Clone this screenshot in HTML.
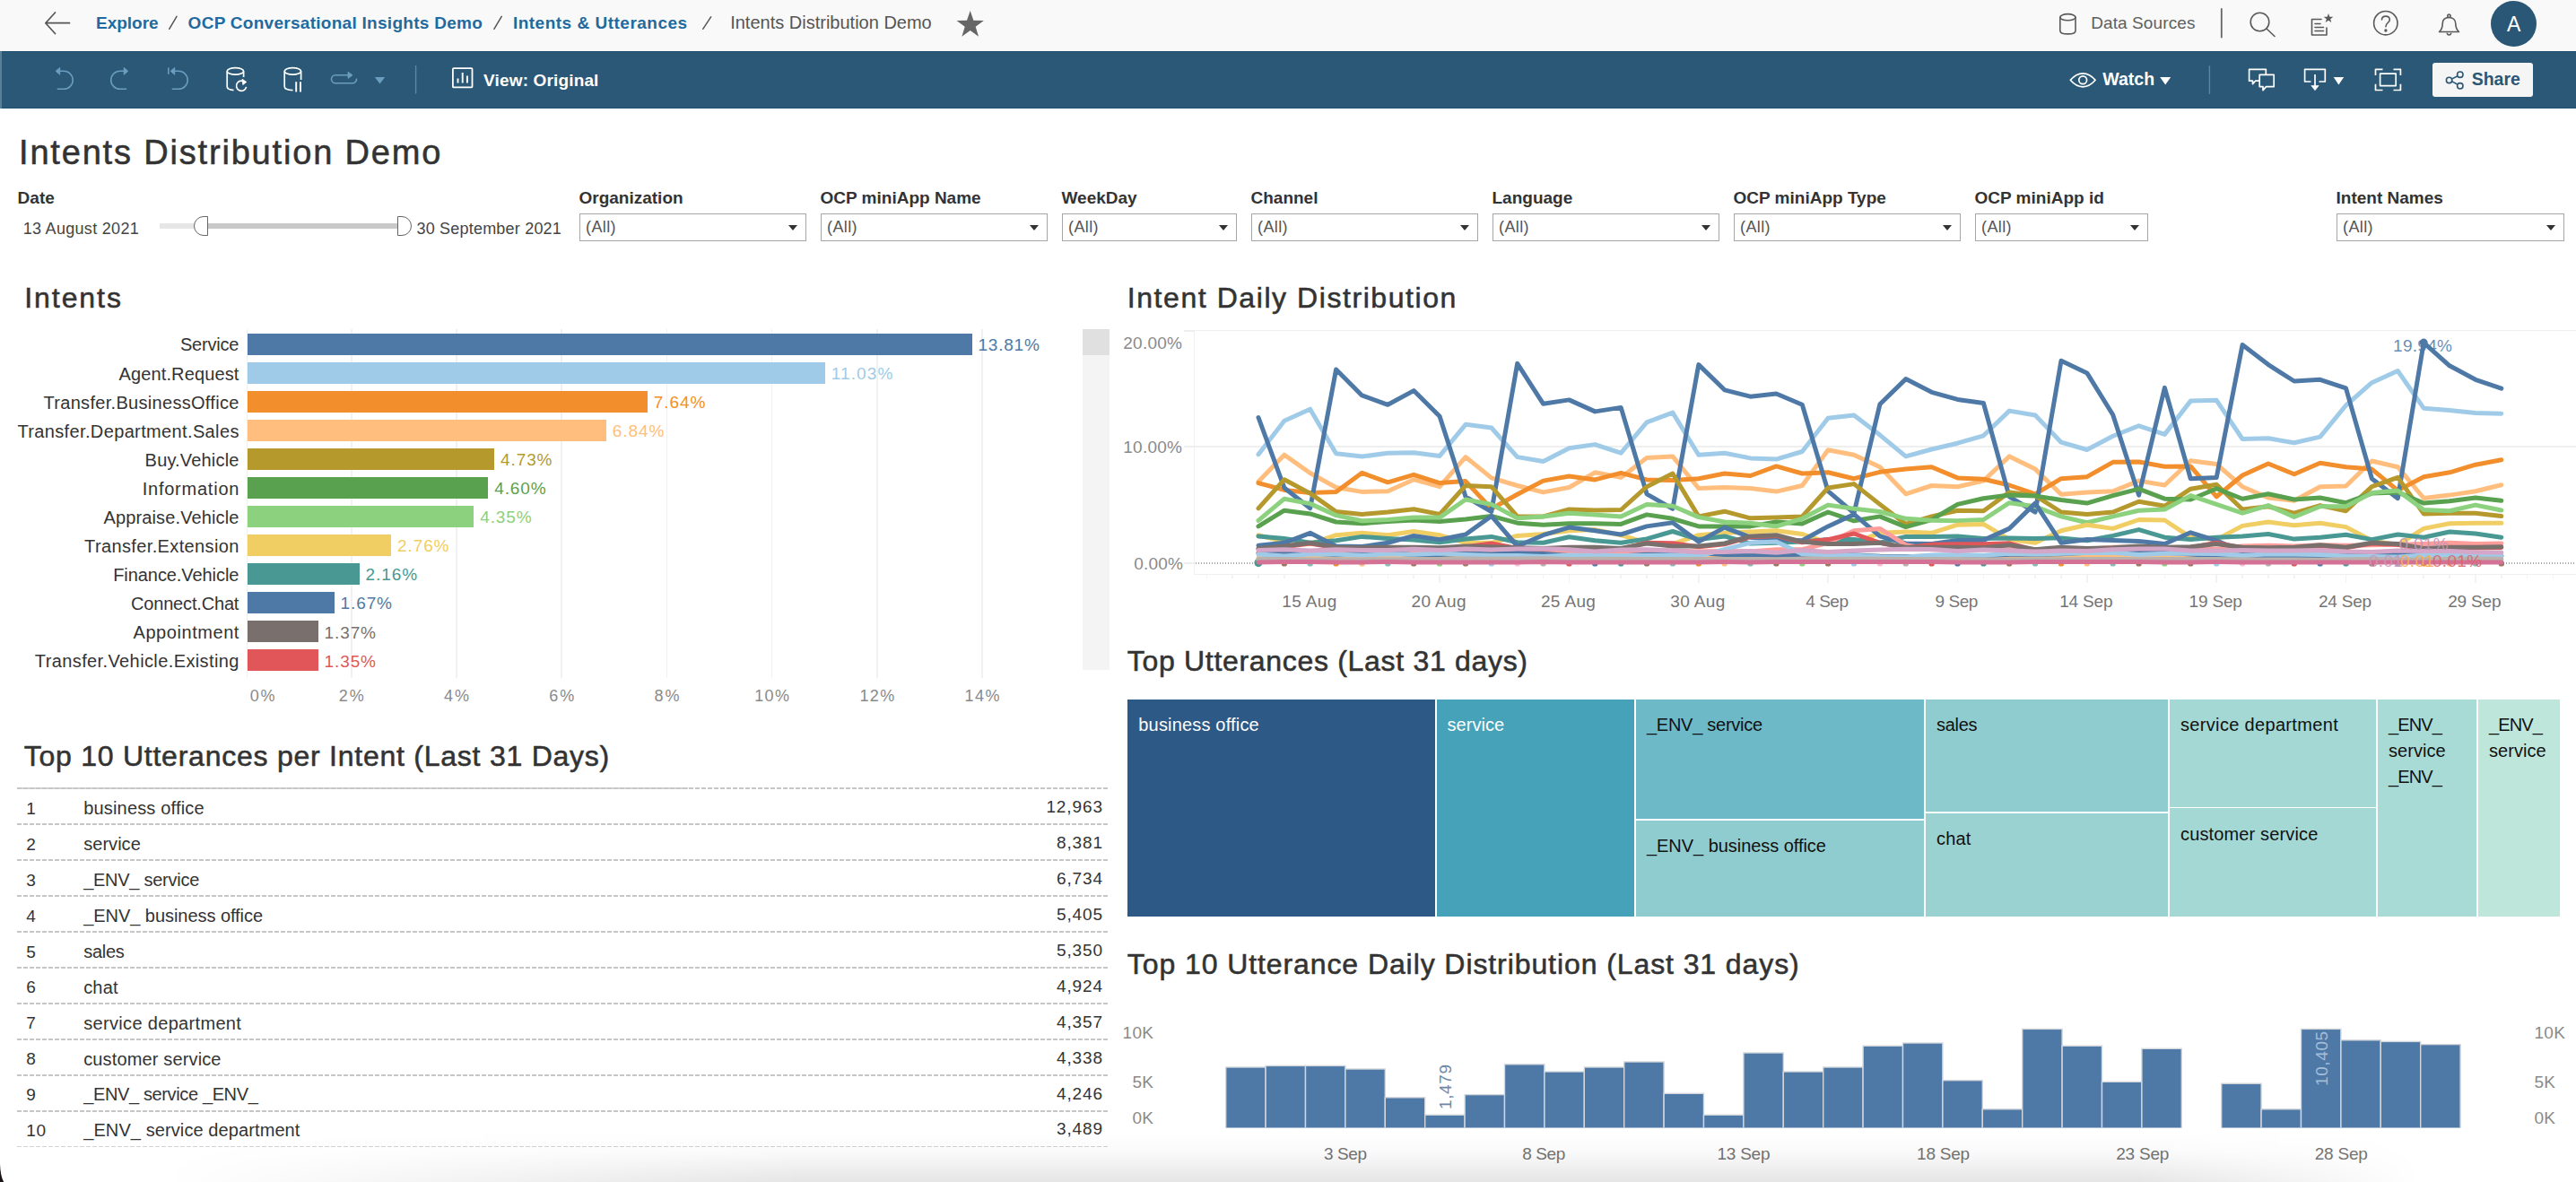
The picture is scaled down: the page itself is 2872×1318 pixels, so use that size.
<!DOCTYPE html><html><head><meta charset="utf-8"><title>Intents Distribution Demo</title><style>
*{box-sizing:border-box;margin:0;padding:0}
html,body{width:2872px;height:1318px;overflow:hidden;background:#fff}
body{position:relative;font-family:"Liberation Sans", sans-serif;color:#333}
.abs{position:absolute}
.t{position:absolute;white-space:pre;line-height:1}
.b{font-weight:700}
svg{position:absolute;overflow:visible}
</style></head><body>
<div class="abs" style="left:0;top:0;width:2872px;height:57px;background:#f9f9f9"></div>
<div class="abs" style="left:0;top:57px;width:2872px;height:64px;background:#2a5876;border-top:1px solid #23506f;border-bottom:1px solid #23506f"></div>
<div class="abs" style="left:0;top:57px;width:2px;height:64px;background:#587e98"></div>
<svg style="left:48px;top:11px" width="32" height="30" fill="none" stroke="#555" stroke-width="1.7" stroke-linecap="round" stroke-linejoin="round"><path d="M29.5 14.7H3M13.5 3L2.8 14.7L13.5 26.5"/></svg>
<div class="t" style="top:16.02px;font-size:19px;color:#1f6a9e;font-weight:700;left:107.00px;">Explore</div>
<div class="t" style="top:16.02px;font-size:19px;color:#1f6a9e;font-weight:700;letter-spacing:0.28px;left:209.60px;">OCP Conversational Insights Demo</div>
<div class="t" style="top:16.02px;font-size:19px;color:#1f6a9e;font-weight:700;letter-spacing:0.5px;left:571.90px;">Intents &amp; Utterances</div>
<div class="t" style="top:15.17px;font-size:20px;color:#555;left:814.20px;">Intents Distribution Demo</div>
<svg style="left:0;top:0" width="900" height="57" stroke="#555" stroke-width="1.5" stroke-linecap="round"><path d="M197 18.4L188.7 32.3M559.2 18.4L550.9 32.3M792.6 18.9L783.7 32.3"/></svg>
<svg style="left:0;top:0" width="1200" height="57"><polygon points="1081.70,11.90 1085.40,22.70 1096.82,22.89 1087.69,29.75 1091.05,40.66 1081.70,34.10 1072.35,40.66 1075.71,29.75 1066.58,22.89 1078.00,22.70" fill="#666"/></svg>
<svg style="left:2290px;top:8px" width="560" height="44" fill="none" stroke="#5a5a5a" stroke-width="1.6" stroke-linecap="round" stroke-linejoin="round"><ellipse cx="15.4" cy="11.2" rx="8.6" ry="3.6"/><path d="M6.8 11.2V26.2C6.8 28.4 10.6 29.9 15.4 29.9S24 28.4 24 26.2V11.2"/><path d="M186.8 2V33.6" stroke="#666" stroke-width="1.8"/><circle cx="229.5" cy="16.5" r="10.3"/><path d="M237 24L246 32.5"/><path d="M298 13.5H287.5V31H304V23"/><path d="M291 18.5H297M291 22.5H300.5M291 26.5H300.5"/><polygon stroke="none" points="306.00,6.90 307.35,10.64 311.33,10.77 308.19,13.21 309.29,17.03 306.00,14.80 302.71,17.03 303.81,13.21 300.67,10.77 304.65,10.64" fill="#5a5a5a"/><circle cx="369.8" cy="17.7" r="13.2"/><path d="M365.5 14C365.5 8.8 374.3 8.8 374.3 14C374.3 17.3 369.9 17.4 369.9 21.8"/><circle cx="369.9" cy="26" r="0.9" fill="#5a5a5a"/><path d="M429.5 27.5H451.5C448 24.5 447.8 21.5 447.8 18.5C447.8 13.8 444.6 11.5 440.5 11.5S433.2 13.8 433.2 18.5C433.2 21.5 433 24.5 429.5 27.5Z"/><circle cx="440.5" cy="9.8" r="1.7"/><path d="M438.3 29.3A2.3 2.3 0 0 0 442.7 29.3"/></svg>
<div class="t" style="top:15.92px;font-size:19px;color:#5f5f5f;letter-spacing:0.1px;left:2331.20px;">Data Sources</div>
<div class="abs" style="left:2776.7px;top:0.7px;width:51.4px;height:51.4px;border-radius:50%;background:#2a5775"></div>
<div class="t" style="top:15.53px;font-size:23px;color:#fff;left:2802.60px;transform:translateX(-50%);">A</div>
<svg style="left:0;top:0" width="2872" height="121" fill="none" stroke="#6b9dbf" stroke-width="1.6" stroke-linecap="butt" stroke-linejoin="round"><path d="M64.2 79.3H71.2A10 10 0 0 1 71.2 99.3H63.7" /><path d="M66.7 75.4L62.2 79.3L66.7 83.2Z" fill="#6b9dbf" stroke-width="1"/><path d="M140.7 79.3H133.7A10 10 0 0 0 133.7 99.3H141.2" /><path d="M138.2 75.4L142.7 79.3L138.2 83.2Z" fill="#6b9dbf" stroke-width="1"/><path d="M192.2 79.3H199.2A10 10 0 0 1 199.2 99.3H191.7" /><path d="M194.7 75.4L190.2 79.3L194.7 83.2Z" fill="#6b9dbf" stroke-width="1"/><path d="M187.8 75.4V82.8"/><g stroke="#fff" stroke-width="1.7"><ellipse cx="262.4" cy="79.4" rx="9.2" ry="3.8"/><path d="M253.2 79.4V96.5C253.2 98.6 256 100.2 260.5 100.6M271.6 79.4V86"/><path d="M273.5 92.2A5.6 5.6 0 1 0 274.6 96.8"/><path d="M270 88.2L274.8 91.4L270.8 94.6Z" fill="#fff" stroke-width="0.8"/></g><g stroke="#fff" stroke-width="1.7"><ellipse cx="326.4" cy="79.4" rx="9.2" ry="3.8"/><path d="M317.2 79.4V96.5C317.2 98.8 320.5 100.4 326.5 100.6M335.6 79.4V89"/><path d="M330.2 91.2V102.6M335 91.2V102.6" stroke-width="1.9"/></g><path d="M392 83.8H374A4.5 4.5 0 0 0 374 92.8H393A4.5 4.5 0 0 0 397.4 87.6"/><path d="M388 80.2L393 83.8L388 87.4Z" fill="#6b9dbf" stroke-width="0.8"/><path d="M417.8 86H429.2L423.5 93.6Z" fill="#6b9dbf" stroke="none"/><path d="M463.6 73V104.6" stroke="#5689ab" stroke-width="1.4"/><g stroke="#fff" stroke-width="1.8"><rect x="504.9" y="76.1" width="21.6" height="21.3" rx="1"/><path d="M510.5 92.5V87.5M515.7 92.5V81M520.9 92.5V84.6" stroke-width="1.9"/></g><g stroke="#fff" stroke-width="1.7"><path d="M2308.3 89.3C2313 83.8 2317.5 81.8 2322.2 81.8S2331.4 83.8 2336.1 89.3C2331.4 94.8 2326.9 96.8 2322.2 96.8S2313 94.8 2308.3 89.3Z"/><circle cx="2322.2" cy="89.3" r="4.4"/></g><path d="M2408.2 86H2420.2L2414.2 94.4Z" fill="#fff" stroke="none"/><path d="M2463.4 73.3V104.8" stroke="#5689ab" stroke-width="1.4"/><g stroke="#fff" stroke-width="1.7"><path d="M2519 90.2H2514.5L2511.5 93.6V90.2H2507.6V77.3H2526.3V83"/><path d="M2519.2 83.4H2535.2V96.6H2526.5L2523 100.6V96.6H2519.2Z"/></g><g stroke="#fff" stroke-width="1.7"><path d="M2576.5 91H2569.6V77.3H2592.3V91H2585.5"/><path d="M2581 83V97"/><path d="M2576.8 95.5H2585.2L2581 100.8Z" fill="#fff" stroke-width="0.6"/></g><path d="M2601.7 86H2613.2L2607.4 94.4Z" fill="#fff" stroke="none"/><g stroke="#fff" stroke-width="1.7"><rect x="2653.6" y="82.2" width="17.6" height="13.4"/><path d="M2648.5 84V77.4H2656.5M2668.5 77.4H2676.4V84M2676.4 93.8V100.5H2668.5M2656.5 100.5H2648.5V93.8"/></g></svg>
<div class="t" style="top:79.62px;font-size:19px;color:#fff;font-weight:700;letter-spacing:0.15px;left:539.10px;">View: Original</div>
<div class="t" style="top:79.09px;font-size:19.5px;color:#fff;font-weight:700;left:2344.30px;">Watch</div>
<div class="abs" style="left:2712px;top:70px;width:112px;height:38px;border-radius:3px;background:#f5f5f5"></div>
<svg style="left:2724px;top:78px" width="26" height="24" fill="#f5f5f5" stroke="#2a5775" stroke-width="1.6"><path d="M7 11.4L18.5 5.5M7 11.4L18.5 17.5" fill="none"/><circle cx="6.6" cy="11.4" r="3.2"/><circle cx="18.8" cy="5.2" r="3.2"/><circle cx="18.8" cy="17.8" r="3.2"/></svg>
<div class="t" style="top:79.09px;font-size:19.5px;color:#2a5775;font-weight:700;left:2755.70px;">Share</div>
<div class="t" style="top:151.03px;font-size:38px;color:#333;letter-spacing:1.819px;left:21.00px;-webkit-text-stroke:0.55px #333;">Intents Distribution Demo</div>
<div class="t" style="top:210.92px;font-size:19px;color:#333;font-weight:700;left:19.60px;">Date</div>
<div class="t" style="top:245.56px;font-size:18px;color:#444;letter-spacing:0.3px;left:25.70px;">13 August 2021</div>
<div class="t" style="top:245.56px;font-size:18px;color:#444;letter-spacing:0.2px;left:464.50px;">30 September 2021</div>
<div class="abs" style="left:178px;top:249px;width:46px;height:6px;background:#e6e6e6"></div>
<div class="abs" style="left:224px;top:249px;width:224px;height:6px;background:#c9c9c9"></div>
<div class="abs" style="left:216px;top:241px;width:16px;height:22px;background:#fff;border:1.5px solid #666;border-radius:11px 0 0 11px"></div>
<div class="abs" style="left:443px;top:241px;width:16px;height:22px;background:#fff;border:1.5px solid #666;border-radius:0 11px 11px 0"></div>
<div class="t" style="top:210.92px;font-size:19px;color:#333;font-weight:700;left:645.50px;">Organization</div>
<div class="abs" style="left:646px;top:238px;width:253px;height:31px;border:1.5px solid #a6a6a6;background:#fff"></div>
<div class="t" style="top:244.26px;font-size:18px;color:#555;letter-spacing:0.4px;left:653.00px;">(All)</div>
<svg style="left:879px;top:251px" width="10" height="6"><path d="M0 0H10L5 6Z" fill="#333"/></svg>
<div class="t" style="top:210.92px;font-size:19px;color:#333;font-weight:700;left:914.50px;">OCP miniApp Name</div>
<div class="abs" style="left:915px;top:238px;width:253px;height:31px;border:1.5px solid #a6a6a6;background:#fff"></div>
<div class="t" style="top:244.26px;font-size:18px;color:#555;letter-spacing:0.4px;left:922.00px;">(All)</div>
<svg style="left:1148px;top:251px" width="10" height="6"><path d="M0 0H10L5 6Z" fill="#333"/></svg>
<div class="t" style="top:210.92px;font-size:19px;color:#333;font-weight:700;left:1183.50px;">WeekDay</div>
<div class="abs" style="left:1184px;top:238px;width:195px;height:31px;border:1.5px solid #a6a6a6;background:#fff"></div>
<div class="t" style="top:244.26px;font-size:18px;color:#555;letter-spacing:0.4px;left:1191.00px;">(All)</div>
<svg style="left:1359px;top:251px" width="10" height="6"><path d="M0 0H10L5 6Z" fill="#333"/></svg>
<div class="t" style="top:210.92px;font-size:19px;color:#333;font-weight:700;left:1394.50px;">Channel</div>
<div class="abs" style="left:1395px;top:238px;width:253px;height:31px;border:1.5px solid #a6a6a6;background:#fff"></div>
<div class="t" style="top:244.26px;font-size:18px;color:#555;letter-spacing:0.4px;left:1402.00px;">(All)</div>
<svg style="left:1628px;top:251px" width="10" height="6"><path d="M0 0H10L5 6Z" fill="#333"/></svg>
<div class="t" style="top:210.92px;font-size:19px;color:#333;font-weight:700;left:1663.50px;">Language</div>
<div class="abs" style="left:1664px;top:238px;width:253px;height:31px;border:1.5px solid #a6a6a6;background:#fff"></div>
<div class="t" style="top:244.26px;font-size:18px;color:#555;letter-spacing:0.4px;left:1671.00px;">(All)</div>
<svg style="left:1897px;top:251px" width="10" height="6"><path d="M0 0H10L5 6Z" fill="#333"/></svg>
<div class="t" style="top:210.92px;font-size:19px;color:#333;font-weight:700;left:1932.50px;">OCP miniApp Type</div>
<div class="abs" style="left:1933px;top:238px;width:253px;height:31px;border:1.5px solid #a6a6a6;background:#fff"></div>
<div class="t" style="top:244.26px;font-size:18px;color:#555;letter-spacing:0.4px;left:1940.00px;">(All)</div>
<svg style="left:2166px;top:251px" width="10" height="6"><path d="M0 0H10L5 6Z" fill="#333"/></svg>
<div class="t" style="top:210.92px;font-size:19px;color:#333;font-weight:700;left:2201.50px;">OCP miniApp id</div>
<div class="abs" style="left:2202px;top:238px;width:193px;height:31px;border:1.5px solid #a6a6a6;background:#fff"></div>
<div class="t" style="top:244.26px;font-size:18px;color:#555;letter-spacing:0.4px;left:2209.00px;">(All)</div>
<svg style="left:2375px;top:251px" width="10" height="6"><path d="M0 0H10L5 6Z" fill="#333"/></svg>
<div class="t" style="top:210.92px;font-size:19px;color:#333;font-weight:700;left:2604.50px;">Intent Names</div>
<div class="abs" style="left:2605px;top:238px;width:254px;height:31px;border:1.5px solid #a6a6a6;background:#fff"></div>
<div class="t" style="top:244.26px;font-size:18px;color:#555;letter-spacing:0.4px;left:2612.00px;">(All)</div>
<svg style="left:2839px;top:251px" width="10" height="6"><path d="M0 0H10L5 6Z" fill="#333"/></svg>
<div class="t" style="top:316.41px;font-size:32px;color:#333;letter-spacing:1.922px;left:27.30px;-webkit-text-stroke:0.55px #333;">Intents</div>
<div class="abs" style="left:274.7px;top:367px;width:1.8px;height:389px;background:#f1f1f1"></div>
<div class="abs" style="left:390.9px;top:367px;width:1.8px;height:389px;background:#f1f1f1"></div>
<div class="abs" style="left:508.1px;top:367px;width:1.8px;height:389px;background:#f1f1f1"></div>
<div class="abs" style="left:625.3px;top:367px;width:1.8px;height:389px;background:#f1f1f1"></div>
<div class="abs" style="left:742.5px;top:367px;width:1.8px;height:389px;background:#f1f1f1"></div>
<div class="abs" style="left:859.7px;top:367px;width:1.8px;height:389px;background:#f1f1f1"></div>
<div class="abs" style="left:976.9px;top:367px;width:1.8px;height:389px;background:#f1f1f1"></div>
<div class="abs" style="left:1094.1px;top:367px;width:1.8px;height:389px;background:#f1f1f1"></div>
<div class="abs" style="left:276px;top:372.00px;width:807.6px;height:24px;background:#4e79a7"></div>
<div class="t" style="top:374.47px;font-size:20px;color:#333;letter-spacing:-0.198px;right:2605.80px;">Service</div>
<div class="t" style="top:375.12px;font-size:19px;color:#4e79a7;letter-spacing:0.811px;left:1090.40px;">13.81%</div>
<div class="abs" style="left:276px;top:404.04px;width:644.0px;height:24px;background:#a0cbe8"></div>
<div class="t" style="top:406.51px;font-size:20px;color:#333;letter-spacing:0.132px;right:2605.47px;">Agent.Request</div>
<div class="t" style="top:407.16px;font-size:19px;color:#a0cbe8;letter-spacing:1.094px;left:926.80px;">11.03%</div>
<div class="abs" style="left:276px;top:436.08px;width:446.0px;height:24px;background:#f28e2b"></div>
<div class="t" style="top:438.55px;font-size:20px;color:#333;letter-spacing:0.304px;right:2605.30px;">Transfer.BusinessOffice</div>
<div class="t" style="top:439.20px;font-size:19px;color:#f28e2b;letter-spacing:0.906px;left:728.80px;">7.64%</div>
<div class="abs" style="left:276px;top:468.12px;width:400.0px;height:24px;background:#ffbe7d"></div>
<div class="t" style="top:470.59px;font-size:20px;color:#333;letter-spacing:0.364px;right:2605.24px;">Transfer.Department.Sales</div>
<div class="t" style="top:471.24px;font-size:19px;color:#ffbe7d;letter-spacing:0.906px;left:682.80px;">6.84%</div>
<div class="abs" style="left:276px;top:500.16px;width:275.2px;height:24px;background:#b6992d"></div>
<div class="t" style="top:502.63px;font-size:20px;color:#333;letter-spacing:0.177px;right:2605.42px;">Buy.Vehicle</div>
<div class="t" style="top:503.28px;font-size:19px;color:#b6992d;letter-spacing:0.906px;left:558.00px;">4.73%</div>
<div class="abs" style="left:276px;top:532.20px;width:268.4px;height:24px;background:#59a14f"></div>
<div class="t" style="top:534.67px;font-size:20px;color:#333;letter-spacing:0.765px;right:2604.84px;">Information</div>
<div class="t" style="top:535.32px;font-size:19px;color:#59a14f;letter-spacing:0.906px;left:551.20px;">4.60%</div>
<div class="abs" style="left:276px;top:564.24px;width:252.4px;height:24px;background:#8cd17d"></div>
<div class="t" style="top:566.71px;font-size:20px;color:#333;letter-spacing:0.127px;right:2605.47px;">Appraise.Vehicle</div>
<div class="t" style="top:567.36px;font-size:19px;color:#8cd17d;letter-spacing:0.906px;left:535.20px;">4.35%</div>
<div class="abs" style="left:276px;top:596.28px;width:160.2px;height:24px;background:#f1ce63"></div>
<div class="t" style="top:598.75px;font-size:20px;color:#333;letter-spacing:0.37px;right:2605.23px;">Transfer.Extension</div>
<div class="t" style="top:599.40px;font-size:19px;color:#f1ce63;letter-spacing:0.906px;left:443.00px;">2.76%</div>
<div class="abs" style="left:276px;top:628.32px;width:124.8px;height:24px;background:#499894"></div>
<div class="t" style="top:630.79px;font-size:20px;color:#333;letter-spacing:-0.072px;right:2605.67px;">Finance.Vehicle</div>
<div class="t" style="top:631.44px;font-size:19px;color:#499894;letter-spacing:0.906px;left:407.60px;">2.16%</div>
<div class="abs" style="left:276px;top:660.36px;width:96.7px;height:24px;background:#4e79a7"></div>
<div class="t" style="top:662.83px;font-size:20px;color:#333;letter-spacing:-0.173px;right:2605.77px;">Connect.Chat</div>
<div class="t" style="top:663.48px;font-size:19px;color:#4e79a7;letter-spacing:0.906px;left:379.50px;">1.67%</div>
<div class="abs" style="left:276px;top:692.40px;width:78.7px;height:24px;background:#79706e"></div>
<div class="t" style="top:694.87px;font-size:20px;color:#333;letter-spacing:0.56px;right:2605.04px;">Appointment</div>
<div class="t" style="top:695.52px;font-size:19px;color:#79706e;letter-spacing:0.906px;left:361.50px;">1.37%</div>
<div class="abs" style="left:276px;top:724.44px;width:78.7px;height:24px;background:#e15759"></div>
<div class="t" style="top:726.91px;font-size:20px;color:#333;letter-spacing:0.389px;right:2605.21px;">Transfer.Vehicle.Existing</div>
<div class="t" style="top:727.56px;font-size:19px;color:#e15759;letter-spacing:0.906px;left:361.50px;">1.35%</div>
<div class="t" style="top:766.76px;font-size:18px;color:#8a8a8a;letter-spacing:1.584px;left:278.80px;">0%</div>
<div class="t" style="top:766.76px;font-size:18px;color:#8a8a8a;letter-spacing:1.984px;left:392.79px;transform:translateX(-50%);">2%</div>
<div class="t" style="top:766.76px;font-size:18px;color:#8a8a8a;letter-spacing:1.984px;left:509.99px;transform:translateX(-50%);">4%</div>
<div class="t" style="top:766.76px;font-size:18px;color:#8a8a8a;letter-spacing:1.984px;left:627.19px;transform:translateX(-50%);">6%</div>
<div class="t" style="top:766.76px;font-size:18px;color:#8a8a8a;letter-spacing:1.984px;left:744.39px;transform:translateX(-50%);">8%</div>
<div class="t" style="top:766.76px;font-size:18px;color:#8a8a8a;letter-spacing:1.386px;left:861.29px;transform:translateX(-50%);">10%</div>
<div class="t" style="top:766.76px;font-size:18px;color:#8a8a8a;letter-spacing:1.386px;left:978.49px;transform:translateX(-50%);">12%</div>
<div class="t" style="top:766.76px;font-size:18px;color:#8a8a8a;letter-spacing:1.386px;left:1095.69px;transform:translateX(-50%);">14%</div>
<div class="abs" style="left:1207px;top:367px;width:30px;height:380px;background:#f4f4f4"></div>
<div class="abs" style="left:1207px;top:367px;width:30px;height:29px;background:#e0e0e0"></div>
<div class="t" style="top:827.21px;font-size:32px;color:#333;letter-spacing:0.757px;left:26.70px;-webkit-text-stroke:0.55px #333;">Top 10 Utterances per Intent (Last 31 Days)</div>
<div class="abs" style="left:19px;top:878.00px;width:1216px;height:2px;background:repeating-linear-gradient(90deg,#c6c6c6 0 5px,transparent 5px 7px)"></div>
<div class="abs" style="left:22.5px;top:878.00px;width:744px;height:2px;background:repeating-linear-gradient(90deg,#c6c6c6 0 5px,transparent 5px 7px);opacity:.75"></div>
<div class="abs" style="left:19px;top:917.95px;width:1216px;height:2px;background:repeating-linear-gradient(90deg,#c6c6c6 0 5px,transparent 5px 7px)"></div>
<div class="abs" style="left:19px;top:957.90px;width:1216px;height:2px;background:repeating-linear-gradient(90deg,#c6c6c6 0 5px,transparent 5px 7px)"></div>
<div class="abs" style="left:19px;top:997.85px;width:1216px;height:2px;background:repeating-linear-gradient(90deg,#c6c6c6 0 5px,transparent 5px 7px)"></div>
<div class="abs" style="left:19px;top:1037.80px;width:1216px;height:2px;background:repeating-linear-gradient(90deg,#c6c6c6 0 5px,transparent 5px 7px)"></div>
<div class="abs" style="left:19px;top:1077.75px;width:1216px;height:2px;background:repeating-linear-gradient(90deg,#c6c6c6 0 5px,transparent 5px 7px)"></div>
<div class="abs" style="left:19px;top:1117.70px;width:1216px;height:2px;background:repeating-linear-gradient(90deg,#c6c6c6 0 5px,transparent 5px 7px)"></div>
<div class="abs" style="left:19px;top:1157.65px;width:1216px;height:2px;background:repeating-linear-gradient(90deg,#c6c6c6 0 5px,transparent 5px 7px)"></div>
<div class="abs" style="left:19px;top:1197.60px;width:1216px;height:2px;background:repeating-linear-gradient(90deg,#c6c6c6 0 5px,transparent 5px 7px)"></div>
<div class="abs" style="left:19px;top:1237.55px;width:1216px;height:2px;background:repeating-linear-gradient(90deg,#c6c6c6 0 5px,transparent 5px 7px)"></div>
<div class="abs" style="left:19px;top:1277.70px;width:1216px;height:1.3px;background:repeating-linear-gradient(90deg,#d2d2d2 0 5px,transparent 5px 7px)"></div>
<div class="t" style="top:891.72px;font-size:19px;color:#333;left:29.30px;">1</div>
<div class="t" style="top:890.87px;font-size:20px;color:#333;letter-spacing:0.176px;left:93.20px;">business office</div>
<div class="t" style="top:889.92px;font-size:19px;color:#333;letter-spacing:0.897px;right:1642.10px;">12,963</div>
<div class="t" style="top:931.67px;font-size:19px;color:#333;left:29.30px;">2</div>
<div class="t" style="top:930.82px;font-size:20px;color:#333;letter-spacing:0.042px;left:93.20px;">service</div>
<div class="t" style="top:929.87px;font-size:19px;color:#333;letter-spacing:0.863px;right:1642.14px;">8,381</div>
<div class="t" style="top:971.62px;font-size:19px;color:#333;left:29.30px;">3</div>
<div class="t" style="top:970.77px;font-size:20px;color:#333;letter-spacing:-0.265px;left:93.20px;">_ENV_ service</div>
<div class="t" style="top:969.82px;font-size:19px;color:#333;letter-spacing:0.863px;right:1642.14px;">6,734</div>
<div class="t" style="top:1011.57px;font-size:19px;color:#333;left:29.30px;">4</div>
<div class="t" style="top:1010.72px;font-size:20px;color:#333;letter-spacing:-0.048px;left:93.20px;">_ENV_ business office</div>
<div class="t" style="top:1009.77px;font-size:19px;color:#333;letter-spacing:0.863px;right:1642.14px;">5,405</div>
<div class="t" style="top:1051.52px;font-size:19px;color:#333;left:29.30px;">5</div>
<div class="t" style="top:1050.67px;font-size:20px;color:#333;letter-spacing:-0.273px;left:93.20px;">sales</div>
<div class="t" style="top:1049.72px;font-size:19px;color:#333;letter-spacing:0.863px;right:1642.14px;">5,350</div>
<div class="t" style="top:1091.47px;font-size:19px;color:#333;left:29.30px;">6</div>
<div class="t" style="top:1090.62px;font-size:20px;color:#333;letter-spacing:0.165px;left:93.20px;">chat</div>
<div class="t" style="top:1089.67px;font-size:19px;color:#333;letter-spacing:0.863px;right:1642.14px;">4,924</div>
<div class="t" style="top:1131.42px;font-size:19px;color:#333;left:29.30px;">7</div>
<div class="t" style="top:1130.57px;font-size:20px;color:#333;letter-spacing:0.33px;left:93.20px;">service department</div>
<div class="t" style="top:1129.62px;font-size:19px;color:#333;letter-spacing:0.863px;right:1642.14px;">4,357</div>
<div class="t" style="top:1171.37px;font-size:19px;color:#333;left:29.30px;">8</div>
<div class="t" style="top:1170.52px;font-size:20px;color:#333;letter-spacing:0.143px;left:93.20px;">customer service</div>
<div class="t" style="top:1169.57px;font-size:19px;color:#333;letter-spacing:0.863px;right:1642.14px;">4,338</div>
<div class="t" style="top:1211.32px;font-size:19px;color:#333;left:29.30px;">9</div>
<div class="t" style="top:1210.47px;font-size:20px;color:#333;letter-spacing:-0.367px;left:93.20px;">_ENV_ service _ENV_</div>
<div class="t" style="top:1209.52px;font-size:19px;color:#333;letter-spacing:0.863px;right:1642.14px;">4,246</div>
<div class="t" style="top:1251.27px;font-size:19px;color:#333;letter-spacing:0.665px;left:29.30px;">10</div>
<div class="t" style="top:1250.42px;font-size:20px;color:#333;letter-spacing:0.095px;left:93.20px;">_ENV_ service department</div>
<div class="t" style="top:1249.47px;font-size:19px;color:#333;letter-spacing:0.863px;right:1642.14px;">3,489</div>
<div class="t" style="top:316.11px;font-size:32px;color:#333;letter-spacing:1.561px;left:1256.80px;-webkit-text-stroke:0.55px #333;">Intent Daily Distribution</div>
<div class="abs" style="left:1331px;top:368px;width:1541px;height:273px;border:1.5px solid #f0f0f0;border-right:none"></div>
<div class="abs" style="left:1320px;top:497.2px;width:1552px;height:1.6px;background:#efefef"></div>
<div class="abs" style="left:1320px;top:368px;width:12px;height:1.5px;background:#eee"></div>
<div class="abs" style="left:1320px;top:627.2px;width:12px;height:1.5px;background:#eee"></div>
<div class="abs" style="left:1333px;top:627px;width:1539px;height:2px;background:repeating-linear-gradient(90deg,#a8a8a8 0 1.5px,transparent 1.5px 3px)"></div>
<div class="abs" style="left:1344.5px;top:641px;width:1.6px;height:4px;background:#f3f3f3"></div>
<div class="abs" style="left:1373.3px;top:641px;width:1.6px;height:4px;background:#f3f3f3"></div>
<div class="abs" style="left:1402.2px;top:641px;width:1.6px;height:4px;background:#f3f3f3"></div>
<div class="abs" style="left:1431.1px;top:641px;width:1.6px;height:4px;background:#f3f3f3"></div>
<div class="abs" style="left:1459.9px;top:641px;width:1.6px;height:9px;background:#f3f3f3"></div>
<div class="abs" style="left:1488.8px;top:641px;width:1.6px;height:4px;background:#f3f3f3"></div>
<div class="abs" style="left:1517.7px;top:641px;width:1.6px;height:4px;background:#f3f3f3"></div>
<div class="abs" style="left:1546.5px;top:641px;width:1.6px;height:4px;background:#f3f3f3"></div>
<div class="abs" style="left:1575.4px;top:641px;width:1.6px;height:4px;background:#f3f3f3"></div>
<div class="abs" style="left:1604.3px;top:641px;width:1.6px;height:9px;background:#f3f3f3"></div>
<div class="abs" style="left:1633.2px;top:641px;width:1.6px;height:4px;background:#f3f3f3"></div>
<div class="abs" style="left:1662.0px;top:641px;width:1.6px;height:4px;background:#f3f3f3"></div>
<div class="abs" style="left:1690.9px;top:641px;width:1.6px;height:4px;background:#f3f3f3"></div>
<div class="abs" style="left:1719.8px;top:641px;width:1.6px;height:4px;background:#f3f3f3"></div>
<div class="abs" style="left:1748.6px;top:641px;width:1.6px;height:9px;background:#f3f3f3"></div>
<div class="abs" style="left:1777.5px;top:641px;width:1.6px;height:4px;background:#f3f3f3"></div>
<div class="abs" style="left:1806.4px;top:641px;width:1.6px;height:4px;background:#f3f3f3"></div>
<div class="abs" style="left:1835.2px;top:641px;width:1.6px;height:4px;background:#f3f3f3"></div>
<div class="abs" style="left:1864.1px;top:641px;width:1.6px;height:4px;background:#f3f3f3"></div>
<div class="abs" style="left:1893.0px;top:641px;width:1.6px;height:9px;background:#f3f3f3"></div>
<div class="abs" style="left:1921.9px;top:641px;width:1.6px;height:4px;background:#f3f3f3"></div>
<div class="abs" style="left:1950.7px;top:641px;width:1.6px;height:4px;background:#f3f3f3"></div>
<div class="abs" style="left:1979.6px;top:641px;width:1.6px;height:4px;background:#f3f3f3"></div>
<div class="abs" style="left:2008.5px;top:641px;width:1.6px;height:4px;background:#f3f3f3"></div>
<div class="abs" style="left:2037.3px;top:641px;width:1.6px;height:9px;background:#f3f3f3"></div>
<div class="abs" style="left:2066.2px;top:641px;width:1.6px;height:4px;background:#f3f3f3"></div>
<div class="abs" style="left:2095.1px;top:641px;width:1.6px;height:4px;background:#f3f3f3"></div>
<div class="abs" style="left:2123.9px;top:641px;width:1.6px;height:4px;background:#f3f3f3"></div>
<div class="abs" style="left:2152.8px;top:641px;width:1.6px;height:4px;background:#f3f3f3"></div>
<div class="abs" style="left:2181.7px;top:641px;width:1.6px;height:9px;background:#f3f3f3"></div>
<div class="abs" style="left:2210.6px;top:641px;width:1.6px;height:4px;background:#f3f3f3"></div>
<div class="abs" style="left:2239.4px;top:641px;width:1.6px;height:4px;background:#f3f3f3"></div>
<div class="abs" style="left:2268.3px;top:641px;width:1.6px;height:4px;background:#f3f3f3"></div>
<div class="abs" style="left:2297.2px;top:641px;width:1.6px;height:4px;background:#f3f3f3"></div>
<div class="abs" style="left:2326.0px;top:641px;width:1.6px;height:9px;background:#f3f3f3"></div>
<div class="abs" style="left:2354.9px;top:641px;width:1.6px;height:4px;background:#f3f3f3"></div>
<div class="abs" style="left:2383.8px;top:641px;width:1.6px;height:4px;background:#f3f3f3"></div>
<div class="abs" style="left:2412.6px;top:641px;width:1.6px;height:4px;background:#f3f3f3"></div>
<div class="abs" style="left:2441.5px;top:641px;width:1.6px;height:4px;background:#f3f3f3"></div>
<div class="abs" style="left:2470.4px;top:641px;width:1.6px;height:9px;background:#f3f3f3"></div>
<div class="abs" style="left:2499.3px;top:641px;width:1.6px;height:4px;background:#f3f3f3"></div>
<div class="abs" style="left:2528.1px;top:641px;width:1.6px;height:4px;background:#f3f3f3"></div>
<div class="abs" style="left:2557.0px;top:641px;width:1.6px;height:4px;background:#f3f3f3"></div>
<div class="abs" style="left:2585.9px;top:641px;width:1.6px;height:4px;background:#f3f3f3"></div>
<div class="abs" style="left:2614.7px;top:641px;width:1.6px;height:9px;background:#f3f3f3"></div>
<div class="abs" style="left:2643.6px;top:641px;width:1.6px;height:4px;background:#f3f3f3"></div>
<div class="abs" style="left:2672.5px;top:641px;width:1.6px;height:4px;background:#f3f3f3"></div>
<div class="abs" style="left:2701.3px;top:641px;width:1.6px;height:4px;background:#f3f3f3"></div>
<div class="abs" style="left:2730.2px;top:641px;width:1.6px;height:4px;background:#f3f3f3"></div>
<div class="abs" style="left:2759.1px;top:641px;width:1.6px;height:9px;background:#f3f3f3"></div>
<div class="abs" style="left:2788.0px;top:641px;width:1.6px;height:4px;background:#f3f3f3"></div>
<div class="abs" style="left:2816.8px;top:641px;width:1.6px;height:4px;background:#f3f3f3"></div>
<div class="abs" style="left:2845.7px;top:641px;width:1.6px;height:4px;background:#f3f3f3"></div>
<div class="t" style="top:660.52px;font-size:19px;color:#757575;letter-spacing:0.365px;left:1459.92px;transform:translateX(-50%);">15 Aug</div>
<div class="t" style="top:660.52px;font-size:19px;color:#757575;letter-spacing:0.365px;left:1604.27px;transform:translateX(-50%);">20 Aug</div>
<div class="t" style="top:660.52px;font-size:19px;color:#757575;letter-spacing:0.365px;left:1748.62px;transform:translateX(-50%);">25 Aug</div>
<div class="t" style="top:660.52px;font-size:19px;color:#757575;letter-spacing:0.365px;left:1892.97px;transform:translateX(-50%);">30 Aug</div>
<div class="t" style="top:660.52px;font-size:19px;color:#757575;letter-spacing:-0.463px;left:2036.91px;transform:translateX(-50%);">4 Sep</div>
<div class="t" style="top:660.52px;font-size:19px;color:#757575;letter-spacing:-0.463px;left:2181.26px;transform:translateX(-50%);">9 Sep</div>
<div class="t" style="top:660.52px;font-size:19px;color:#757575;letter-spacing:-0.184px;left:2325.75px;transform:translateX(-50%);">14 Sep</div>
<div class="t" style="top:660.52px;font-size:19px;color:#757575;letter-spacing:-0.184px;left:2470.10px;transform:translateX(-50%);">19 Sep</div>
<div class="t" style="top:660.52px;font-size:19px;color:#757575;letter-spacing:-0.184px;left:2614.45px;transform:translateX(-50%);">24 Sep</div>
<div class="t" style="top:660.52px;font-size:19px;color:#757575;letter-spacing:-0.184px;left:2758.80px;transform:translateX(-50%);">29 Sep</div>
<div class="t" style="top:372.92px;font-size:19px;color:#8a8a8a;letter-spacing:0.251px;right:1553.75px;">20.00%</div>
<div class="t" style="top:488.92px;font-size:19px;color:#8a8a8a;letter-spacing:0.251px;right:1553.75px;">10.00%</div>
<div class="t" style="top:618.92px;font-size:19px;color:#8a8a8a;letter-spacing:0.231px;right:1552.77px;">0.00%</div>
<svg style="left:0;top:0" width="2872" height="700" fill="none" stroke-width="5" stroke-linejoin="round" stroke-linecap="round"><circle cx="1403.0" cy="627.6" r="4.6" fill="#499894"/><circle cx="1431.9" cy="628.4" r="3.2" fill="#9d7660"/><circle cx="1460.7" cy="628.4" r="3.2" fill="#86bcb6"/><circle cx="1489.6" cy="628.4" r="3.2" fill="#f28e2b"/><circle cx="1518.5" cy="628.4" r="3.2" fill="#ffbe7d"/><circle cx="1547.3" cy="628.4" r="3.2" fill="#86bcb6"/><circle cx="1576.2" cy="628.4" r="3.2" fill="#9d7660"/><circle cx="1605.1" cy="628.4" r="3.2" fill="#8cd17d"/><circle cx="1634.0" cy="628.4" r="3.2" fill="#9d7660"/><circle cx="1662.8" cy="628.4" r="3.2" fill="#a0cbe8"/><circle cx="1691.7" cy="628.4" r="3.2" fill="#fabfd2"/><circle cx="1720.6" cy="628.4" r="3.2" fill="#bab0ac"/><circle cx="1749.4" cy="628.4" r="3.2" fill="#e15759"/><circle cx="1778.3" cy="628.4" r="3.2" fill="#4e79a7"/><circle cx="1807.2" cy="628.4" r="3.2" fill="#499894"/><circle cx="1836.0" cy="628.4" r="3.2" fill="#9d7660"/><circle cx="1864.9" cy="628.4" r="3.2" fill="#86bcb6"/><circle cx="1893.8" cy="628.4" r="3.2" fill="#f28e2b"/><circle cx="1922.7" cy="628.4" r="3.2" fill="#ffbe7d"/><circle cx="1951.5" cy="628.4" r="3.2" fill="#86bcb6"/><circle cx="1980.4" cy="628.4" r="3.2" fill="#9d7660"/><circle cx="2009.3" cy="628.4" r="3.2" fill="#8cd17d"/><circle cx="2038.1" cy="628.4" r="3.2" fill="#9d7660"/><circle cx="2067.0" cy="628.4" r="3.2" fill="#a0cbe8"/><circle cx="2095.9" cy="628.4" r="3.2" fill="#fabfd2"/><circle cx="2124.8" cy="628.4" r="3.2" fill="#bab0ac"/><circle cx="2153.6" cy="628.4" r="3.2" fill="#e15759"/><circle cx="2182.5" cy="628.4" r="3.2" fill="#4e79a7"/><circle cx="2211.4" cy="628.4" r="3.2" fill="#499894"/><circle cx="2240.2" cy="628.4" r="3.2" fill="#9d7660"/><circle cx="2269.1" cy="628.4" r="3.2" fill="#86bcb6"/><circle cx="2298.0" cy="628.4" r="3.2" fill="#f28e2b"/><circle cx="2326.8" cy="628.4" r="3.2" fill="#ffbe7d"/><circle cx="2355.7" cy="628.4" r="3.2" fill="#86bcb6"/><circle cx="2384.6" cy="628.4" r="3.2" fill="#9d7660"/><circle cx="2413.4" cy="628.4" r="3.2" fill="#8cd17d"/><circle cx="2442.3" cy="628.4" r="3.2" fill="#9d7660"/><circle cx="2471.2" cy="628.4" r="3.2" fill="#a0cbe8"/><circle cx="2500.1" cy="628.4" r="3.2" fill="#fabfd2"/><circle cx="2528.9" cy="628.4" r="3.2" fill="#bab0ac"/><circle cx="2557.8" cy="628.4" r="3.2" fill="#e15759"/><circle cx="2586.7" cy="628.4" r="3.2" fill="#4e79a7"/><circle cx="2615.5" cy="628.4" r="3.2" fill="#499894"/><circle cx="2644.4" cy="628.4" r="3.2" fill="#9d7660"/><circle cx="2673.3" cy="628.4" r="3.2" fill="#86bcb6"/><circle cx="2702.2" cy="628.4" r="3.2" fill="#f28e2b"/><circle cx="2731.0" cy="628.4" r="3.2" fill="#ffbe7d"/><circle cx="2759.9" cy="628.4" r="3.2" fill="#86bcb6"/><circle cx="2788.8" cy="628.4" r="3.2" fill="#9d7660"/><polyline points="1403.0,506.7 1431.9,469.2 1460.7,456.2 1489.6,505.7 1518.5,509.1 1547.3,505.2 1576.2,504.7 1605.1,508.4 1634.0,473.3 1662.8,477.0 1691.7,509.6 1720.6,514.5 1749.4,499.8 1778.3,495.6 1807.2,505.2 1836.0,470.9 1864.9,460.1 1893.8,507.2 1922.7,505.2 1951.5,510.9 1980.4,512.1 2009.3,503.5 2038.1,466.2 2067.0,463.0 2095.9,485.1 2124.8,508.9 2153.6,501.0 2182.5,494.2 2211.4,485.8 2240.2,458.1 2269.1,463.0 2298.0,493.2 2326.8,501.5 2355.7,486.3 2384.6,474.8 2413.4,484.4 2442.3,447.1 2471.2,446.3 2500.1,489.5 2528.9,488.8 2557.8,493.7 2586.7,487.1 2615.5,452.0 2644.4,426.7 2673.3,413.5 2702.2,455.2 2731.0,457.6 2759.9,460.6 2788.8,461.3" stroke="#a0cbe8"/><polyline points="1403.0,537.1 1431.9,507.2 1460.7,527.5 1489.6,543.5 1518.5,548.4 1547.3,547.7 1576.2,534.7 1605.1,542.7 1634.0,509.6 1662.8,532.9 1691.7,541.5 1720.6,548.9 1749.4,543.5 1778.3,526.8 1807.2,532.4 1836.0,510.4 1864.9,508.9 1893.8,544.5 1922.7,543.5 1951.5,544.5 1980.4,548.1 2009.3,541.5 2038.1,501.8 2067.0,507.2 2095.9,520.7 2124.8,550.8 2153.6,541.5 2182.5,542.7 2211.4,536.1 2240.2,508.9 2269.1,523.1 2298.0,551.3 2326.8,548.9 2355.7,547.7 2384.6,536.1 2413.4,541.0 2442.3,513.8 2471.2,517.5 2500.1,542.7 2528.9,555.0 2557.8,558.2 2586.7,542.7 2615.5,542.0 2644.4,514.0 2673.3,520.7 2702.2,555.5 2731.0,552.1 2759.9,547.7 2788.8,540.8" stroke="#ffbe7d"/><polyline points="1403.0,538.6 1431.9,546.4 1460.7,549.4 1489.6,548.4 1518.5,527.3 1547.3,537.8 1576.2,529.3 1605.1,538.6 1634.0,536.6 1662.8,567.3 1691.7,551.3 1720.6,536.1 1749.4,531.0 1778.3,534.9 1807.2,527.3 1836.0,534.9 1864.9,535.4 1893.8,533.7 1922.7,528.0 1951.5,530.5 1980.4,519.9 2009.3,528.0 2038.1,526.8 2067.0,533.7 2095.9,526.3 2124.8,523.1 2153.6,520.7 2182.5,532.9 2211.4,534.2 2240.2,541.0 2269.1,550.8 2298.0,533.7 2326.8,531.7 2355.7,515.3 2384.6,515.0 2413.4,520.2 2442.3,519.9 2471.2,553.8 2500.1,530.0 2528.9,517.0 2557.8,528.8 2586.7,516.3 2615.5,520.7 2644.4,523.1 2673.3,546.9 2702.2,531.7 2731.0,526.8 2759.9,518.2 2788.8,512.8" stroke="#f28e2b"/><polyline points="1403.0,465.5 1431.9,544.0 1460.7,566.8 1489.6,412.0 1518.5,440.9 1547.3,451.3 1576.2,435.6 1605.1,464.3 1634.0,553.8 1662.8,570.5 1691.7,405.4 1720.6,450.3 1749.4,445.9 1778.3,458.9 1807.2,454.4 1836.0,550.8 1864.9,567.3 1893.8,406.6 1922.7,434.8 1951.5,442.2 1980.4,439.0 2009.3,451.3 2038.1,547.7 2067.0,572.2 2095.9,450.8 2124.8,422.6 2153.6,437.3 2182.5,445.4 2211.4,449.5 2240.2,553.8 2269.1,571.0 2298.0,402.2 2326.8,415.9 2355.7,462.5 2384.6,552.1 2413.4,432.4 2442.3,533.7 2471.2,532.4 2500.1,384.5 2528.9,406.6 2557.8,425.0 2586.7,423.3 2615.5,432.9 2644.4,533.7 2673.3,555.7 2702.2,382.1 2731.0,407.8 2759.9,423.3 2788.8,433.1" stroke="#4e79a7"/><polyline points="1403.0,566.8 1431.9,534.7 1460.7,550.1 1489.6,570.5 1518.5,573.4 1547.3,571.0 1576.2,567.8 1605.1,573.4 1634.0,541.5 1662.8,542.7 1691.7,575.9 1720.6,575.9 1749.4,568.0 1778.3,569.0 1807.2,568.5 1836.0,542.7 1864.9,528.0 1893.8,575.9 1922.7,570.2 1951.5,577.8 1980.4,577.1 2009.3,575.9 2038.1,544.0 2067.0,539.6 2095.9,562.4 2124.8,584.4 2153.6,575.9 2182.5,569.2 2211.4,569.7 2240.2,548.9 2269.1,552.6 2298.0,571.0 2326.8,573.4 2355.7,571.0 2384.6,559.2 2413.4,564.3 2442.3,545.2 2471.2,540.3 2500.1,568.0 2528.9,564.8 2557.8,572.2 2586.7,563.6 2615.5,569.7 2644.4,542.7 2673.3,532.4 2702.2,572.9 2731.0,572.2 2759.9,572.2 2788.8,575.4" stroke="#b6992d"/><polyline points="1403.0,586.9 1431.9,569.2 1460.7,572.9 1489.6,582.0 1518.5,583.7 1547.3,581.5 1576.2,580.0 1605.1,581.5 1634.0,579.0 1662.8,575.4 1691.7,583.2 1720.6,585.2 1749.4,583.7 1778.3,583.7 1807.2,584.4 1836.0,573.9 1864.9,578.3 1893.8,586.9 1922.7,586.9 1951.5,586.9 1980.4,582.0 2009.3,584.0 2038.1,571.0 2067.0,580.8 2095.9,575.9 2124.8,587.6 2153.6,579.5 2182.5,562.4 2211.4,555.7 2240.2,552.1 2269.1,553.0 2298.0,557.5 2326.8,561.1 2355.7,552.6 2384.6,545.2 2413.4,556.2 2442.3,557.0 2471.2,544.7 2500.1,556.2 2528.9,550.8 2557.8,557.0 2586.7,555.0 2615.5,560.7 2644.4,550.1 2673.3,548.9 2702.2,561.1 2731.0,558.7 2759.9,555.0 2788.8,558.2" stroke="#59a14f"/><polyline points="1403.0,580.3 1431.9,556.2 1460.7,561.6 1489.6,574.6 1518.5,580.8 1547.3,579.5 1576.2,577.1 1605.1,577.1 1634.0,557.0 1662.8,562.4 1691.7,577.8 1720.6,575.9 1749.4,572.2 1778.3,574.1 1807.2,575.9 1836.0,562.4 1864.9,564.3 1893.8,576.6 1922.7,582.0 1951.5,583.2 1980.4,586.9 2009.3,578.3 2038.1,563.1 2067.0,567.3 2095.9,570.5 2124.8,578.3 2153.6,580.3 2182.5,580.8 2211.4,579.5 2240.2,560.7 2269.1,564.8 2298.0,575.9 2326.8,582.7 2355.7,575.9 2384.6,569.2 2413.4,568.0 2442.3,552.6 2471.2,562.4 2500.1,572.2 2528.9,563.6 2557.8,576.4 2586.7,564.8 2615.5,564.8 2644.4,549.6 2673.3,546.9 2702.2,568.5 2731.0,569.7 2759.9,563.1 2788.8,569.0" stroke="#8cd17d"/><polyline points="1403.0,596.7 1431.9,604.1 1460.7,606.5 1489.6,596.7 1518.5,594.3 1547.3,596.7 1576.2,592.5 1605.1,596.7 1634.0,605.3 1662.8,605.3 1691.7,597.4 1720.6,595.5 1749.4,591.8 1778.3,590.6 1807.2,596.7 1836.0,605.3 1864.9,606.5 1893.8,596.7 1922.7,594.3 1951.5,593.0 1980.4,591.8 2009.3,595.5 2038.1,605.3 2067.0,605.3 2095.9,594.3 2124.8,593.0 2153.6,594.3 2182.5,585.2 2211.4,584.4 2240.2,601.6 2269.1,605.3 2298.0,591.8 2326.8,585.2 2355.7,589.4 2384.6,579.5 2413.4,580.0 2442.3,599.2 2471.2,601.6 2500.1,586.4 2528.9,582.0 2557.8,585.7 2586.7,583.2 2615.5,587.6 2644.4,602.8 2673.3,607.7 2702.2,589.4 2731.0,583.7 2759.9,583.2 2788.8,583.2" stroke="#f1ce63"/><polyline points="1403.0,597.9 1431.9,600.4 1460.7,605.3 1489.6,602.8 1518.5,598.4 1547.3,600.4 1576.2,602.1 1605.1,604.8 1634.0,600.9 1662.8,598.4 1691.7,604.8 1720.6,605.3 1749.4,598.7 1778.3,602.8 1807.2,605.3 1836.0,600.9 1864.9,592.5 1893.8,601.6 1922.7,597.9 1951.5,606.0 1980.4,605.3 2009.3,604.1 2038.1,601.6 2067.0,601.6 2095.9,605.3 2124.8,598.4 2153.6,598.4 2182.5,597.9 2211.4,600.4 2240.2,599.9 2269.1,600.4 2298.0,599.9 2326.8,602.8 2355.7,597.4 2384.6,590.6 2413.4,599.2 2442.3,601.6 2471.2,599.2 2500.1,597.9 2528.9,595.5 2557.8,601.1 2586.7,599.2 2615.5,596.2 2644.4,601.6 2673.3,596.0 2702.2,599.2 2731.0,593.0 2759.9,595.0 2788.8,599.2" stroke="#499894"/><polyline points="1403.0,608.2 1431.9,605.3 1460.7,594.3 1489.6,609.0 1518.5,609.5 1547.3,605.3 1576.2,597.4 1605.1,601.6 1634.0,596.0 1662.8,575.4 1691.7,609.0 1720.6,596.7 1749.4,588.1 1778.3,591.8 1807.2,596.0 1836.0,586.9 1864.9,582.7 1893.8,604.1 1922.7,588.1 1951.5,599.2 1980.4,601.6 2009.3,602.8 2038.1,586.9 2067.0,573.4 2095.9,597.9 2124.8,606.0 2153.6,606.5 2182.5,602.4 2211.4,602.4 2240.2,589.4 2269.1,561.1 2298.0,605.3 2326.8,601.6 2355.7,602.4 2384.6,603.6 2413.4,606.5 2442.3,593.8 2471.2,602.8 2500.1,615.1 2528.9,617.6 2557.8,617.6 2586.7,618.8 2615.5,619.5 2644.4,618.8 2673.3,620.0 2702.2,619.5 2731.0,620.5 2759.9,620.0 2788.8,620.0" stroke="#4e79a7"/><polyline points="1403.0,616.3 1431.9,616.3 1460.7,615.6 1489.6,616.3 1518.5,616.3 1547.3,615.6 1576.2,615.1 1605.1,616.3 1634.0,615.1 1662.8,615.1 1691.7,615.1 1720.6,615.1 1749.4,615.6 1778.3,615.1 1807.2,615.1 1836.0,613.9 1864.9,613.9 1893.8,615.1 1922.7,614.6 1951.5,615.1 1980.4,612.7 2009.3,612.7 2038.1,605.3 2067.0,591.8 2095.9,589.4 2124.8,607.7 2153.6,612.7 2182.5,612.7 2211.4,612.7 2240.2,612.7 2269.1,612.7 2298.0,612.7 2326.8,612.2 2355.7,610.2 2384.6,609.7 2413.4,611.4 2442.3,612.2 2471.2,612.2 2500.1,609.0 2528.9,608.2 2557.8,609.0 2586.7,607.7 2615.5,608.2 2644.4,607.7 2673.3,607.3 2702.2,606.5 2731.0,605.3 2759.9,606.5 2788.8,606.0" stroke="#ff9d9a"/><polyline points="1403.0,612.2 1431.9,609.7 1460.7,606.0 1489.6,610.9 1518.5,611.4 1547.3,610.9 1576.2,610.9 1605.1,611.4 1634.0,609.7 1662.8,606.0 1691.7,611.4 1720.6,612.2 1749.4,610.9 1778.3,610.9 1807.2,612.2 1836.0,605.3 1864.9,605.8 1893.8,609.7 1922.7,606.8 1951.5,598.7 1980.4,597.4 2009.3,604.8 2038.1,601.6 2067.0,595.0 2095.9,605.3 2124.8,610.9 2153.6,607.3 2182.5,606.8 2211.4,606.8 2240.2,605.8 2269.1,613.4 2298.0,610.9 2326.8,612.2 2355.7,611.4 2384.6,609.7 2413.4,610.9 2442.3,610.4 2471.2,605.3 2500.1,610.9 2528.9,611.4 2557.8,610.9 2586.7,608.5 2615.5,610.9 2644.4,606.0 2673.3,607.3 2702.2,612.2 2731.0,610.9 2759.9,610.9 2788.8,610.4" stroke="#e15759"/><polyline points="1403.0,611.4 1431.9,609.0 1460.7,605.3 1489.6,610.2 1518.5,610.7 1547.3,610.2 1576.2,610.2 1605.1,610.7 1634.0,609.0 1662.8,609.7 1691.7,610.7 1720.6,611.4 1749.4,610.2 1778.3,610.2 1807.2,611.4 1836.0,606.0 1864.9,609.0 1893.8,609.0 1922.7,606.0 1951.5,597.9 1980.4,596.7 2009.3,604.1 2038.1,606.5 2067.0,606.5 2095.9,605.3 2124.8,610.2 2153.6,610.2 2182.5,610.2 2211.4,610.7 2240.2,607.7 2269.1,612.7 2298.0,610.2 2326.8,611.4 2355.7,610.7 2384.6,609.0 2413.4,610.2 2442.3,609.7 2471.2,606.5 2500.1,610.2 2528.9,610.7 2557.8,610.2 2586.7,607.7 2615.5,610.2 2644.4,605.3 2673.3,606.5 2702.2,611.4 2731.0,610.2 2759.9,610.2 2788.8,609.7" stroke="#79706e"/><polyline points="1403.0,624.4 1431.9,624.4 1460.7,624.2 1489.6,624.7 1518.5,625.2 1547.3,625.4 1576.2,624.9 1605.1,625.2 1634.0,625.2 1662.8,624.7 1691.7,625.2 1720.6,625.4 1749.4,624.9 1778.3,625.4 1807.2,625.2 1836.0,624.9 1864.9,625.4 1893.8,625.4 1922.7,624.9 1951.5,624.9 1980.4,624.9 2009.3,624.7 2038.1,624.4 2067.0,624.4 2095.9,624.9 2124.8,624.4 2153.6,624.7 2182.5,624.7 2211.4,624.4 2240.2,624.4 2269.1,624.9 2298.0,624.9 2326.8,624.4 2355.7,625.2 2384.6,625.4 2413.4,625.7 2442.3,624.9 2471.2,624.7 2500.1,624.4 2528.9,624.9 2557.8,624.7 2586.7,624.4 2615.5,624.7 2644.4,625.2 2673.3,625.4 2702.2,624.9 2731.0,624.7 2759.9,625.2 2788.8,625.2" stroke="#86bcb6"/><polyline points="1403.0,623.7 1431.9,623.4 1460.7,623.4 1489.6,623.7 1518.5,623.0 1547.3,623.2 1576.2,623.9 1605.1,623.9 1634.0,623.9 1662.8,623.4 1691.7,623.0 1720.6,623.4 1749.4,623.2 1778.3,623.7 1807.2,624.2 1836.0,623.4 1864.9,623.2 1893.8,623.9 1922.7,623.9 1951.5,623.0 1980.4,622.5 2009.3,622.5 2038.1,623.4 2067.0,623.7 2095.9,623.0 2124.8,623.4 2153.6,624.2 2182.5,623.9 2211.4,623.2 2240.2,623.4 2269.1,622.7 2298.0,622.2 2326.8,623.4 2355.7,623.4 2384.6,623.4 2413.4,623.9 2442.3,623.4 2471.2,623.9 2500.1,623.9 2528.9,623.2 2557.8,622.7 2586.7,622.7 2615.5,622.5 2644.4,623.0 2673.3,622.7 2702.2,623.0 2731.0,622.5 2759.9,623.4 2788.8,623.2" stroke="#8cd17d"/><polyline points="1403.0,622.0 1431.9,620.8 1460.7,620.3 1489.6,620.0 1518.5,620.0 1547.3,620.5 1576.2,621.0 1605.1,620.5 1634.0,619.8 1662.8,620.3 1691.7,620.3 1720.6,620.8 1749.4,621.7 1778.3,621.7 1807.2,621.5 1836.0,621.5 1864.9,621.5 1893.8,620.5 1922.7,621.5 1951.5,621.7 1980.4,622.2 2009.3,622.2 2038.1,621.2 2067.0,621.0 2095.9,620.3 2124.8,620.8 2153.6,620.0 2182.5,619.8 2211.4,619.8 2240.2,619.8 2269.1,620.0 2298.0,619.5 2326.8,619.3 2355.7,619.5 2384.6,619.5 2413.4,620.0 2442.3,619.5 2471.2,621.0 2500.1,621.2 2528.9,620.5 2557.8,620.3 2586.7,620.3 2615.5,620.5 2644.4,620.0 2673.3,621.2 2702.2,622.0 2731.0,621.5 2759.9,621.2 2788.8,620.3" stroke="#ffbe7d"/><polyline points="1403.0,616.8 1431.9,617.1 1460.7,616.8 1489.6,618.8 1518.5,617.3 1547.3,616.1 1576.2,618.8 1605.1,618.5 1634.0,617.3 1662.8,617.8 1691.7,616.6 1720.6,617.6 1749.4,619.5 1778.3,620.3 1807.2,620.0 1836.0,618.3 1864.9,617.8 1893.8,616.8 1922.7,618.5 1951.5,618.5 1980.4,619.3 2009.3,618.3 2038.1,617.3 2067.0,618.8 2095.9,620.3 2124.8,620.5 2153.6,620.5 2182.5,620.5 2211.4,620.3 2240.2,618.3 2269.1,618.3 2298.0,617.8 2326.8,616.3 2355.7,615.8 2384.6,616.3 2413.4,616.3 2442.3,618.1 2471.2,619.8 2500.1,618.8 2528.9,620.0 2557.8,620.8 2586.7,621.2 2615.5,619.3 2644.4,617.8 2673.3,617.1 2702.2,616.6 2731.0,616.6 2759.9,617.8 2788.8,619.5" stroke="#4e79a7"/><polyline points="1403.0,618.1 1431.9,620.0 1460.7,618.1 1489.6,618.1 1518.5,619.3 1547.3,617.8 1576.2,618.3 1605.1,617.1 1634.0,618.5 1662.8,619.5 1691.7,619.5 1720.6,620.5 1749.4,619.0 1778.3,619.5 1807.2,619.5 1836.0,619.5 1864.9,619.0 1893.8,620.0 1922.7,612.7 1951.5,605.3 1980.4,604.1 2009.3,617.8 2038.1,619.0 2067.0,619.3 2095.9,620.8 2124.8,621.0 2153.6,619.0 2182.5,618.5 2211.4,619.3 2240.2,617.3 2269.1,618.1 2298.0,617.3 2326.8,616.6 2355.7,616.3 2384.6,618.5 2413.4,617.3 2442.3,617.3 2471.2,617.6 2500.1,619.5 2528.9,617.8 2557.8,618.1 2586.7,618.5 2615.5,620.0 2644.4,620.5 2673.3,621.0 2702.2,619.0 2731.0,618.5 2759.9,618.3 2788.8,619.8" stroke="#a0cbe8"/><polyline points="1403.0,613.6 1431.9,612.7 1460.7,614.1 1489.6,612.7 1518.5,613.6 1547.3,613.4 1576.2,612.2 1605.1,613.4 1634.0,611.9 1662.8,612.9 1691.7,611.9 1720.6,611.7 1749.4,612.7 1778.3,614.9 1807.2,613.1 1836.0,612.7 1864.9,614.1 1893.8,615.8 1922.7,615.4 1951.5,614.6 1980.4,616.3 2009.3,613.6 2038.1,615.4 2067.0,614.1 2095.9,612.9 2124.8,612.2 2153.6,612.4 2182.5,614.6 2211.4,613.1 2240.2,614.1 2269.1,614.9 2298.0,614.1 2326.8,614.4 2355.7,612.7 2384.6,611.9 2413.4,611.9 2442.3,613.9 2471.2,613.9 2500.1,613.4 2528.9,614.1 2557.8,614.1 2586.7,613.4 2615.5,615.1 2644.4,615.6 2673.3,613.9 2702.2,614.4 2731.0,614.6 2759.9,615.8 2788.8,616.1" stroke="#d4a6c8"/><polyline points="1403.0,623.4 1431.9,623.4 1460.7,623.9 1489.6,623.7 1518.5,623.9 1547.3,623.7 1576.2,623.7 1605.1,623.4 1634.0,623.0 1662.8,623.2 1691.7,623.0 1720.6,622.7 1749.4,623.4 1778.3,623.2 1807.2,623.2 1836.0,623.4 1864.9,623.4 1893.8,623.4 1922.7,623.4 1951.5,623.4 1980.4,623.7 2009.3,623.2 2038.1,623.4 2067.0,623.2 2095.9,623.2 2124.8,623.4 2153.6,623.4 2182.5,623.4 2211.4,623.7 2240.2,623.9 2269.1,623.7 2298.0,623.7 2326.8,623.4 2355.7,623.4 2384.6,623.7 2413.4,623.4 2442.3,623.4 2471.2,623.4 2500.1,623.9 2528.9,623.9 2557.8,623.9 2586.7,624.2 2615.5,623.7 2644.4,623.4 2673.3,623.9 2702.2,623.9 2731.0,623.4 2759.9,623.0 2788.8,623.2" stroke="#bab0ac"/><polyline points="1403.0,626.9 1431.9,626.6 1460.7,626.6 1489.6,626.9 1518.5,626.9 1547.3,626.6 1576.2,626.9 1605.1,626.9 1634.0,627.1 1662.8,626.9 1691.7,627.1 1720.6,626.6 1749.4,626.9 1778.3,626.9 1807.2,626.9 1836.0,626.9 1864.9,627.1 1893.8,626.9 1922.7,626.6 1951.5,626.9 1980.4,626.6 2009.3,626.6 2038.1,626.6 2067.0,626.4 2095.9,626.6 2124.8,626.6 2153.6,626.6 2182.5,626.9 2211.4,626.9 2240.2,626.9 2269.1,626.6 2298.0,626.6 2326.8,626.6 2355.7,626.6 2384.6,626.4 2413.4,626.9 2442.3,626.9 2471.2,626.6 2500.1,626.9 2528.9,627.1 2557.8,626.9 2586.7,626.9 2615.5,626.9 2644.4,626.9 2673.3,627.1 2702.2,626.9 2731.0,626.9 2759.9,626.9 2788.8,627.1" stroke="#d37295"/><circle cx="2702.2" cy="382.1" r="4.5" fill="#4e79a7"/></svg>
<div class="t" style="top:375.81px;font-size:19px;color:rgba(78,121,167,0.85);letter-spacing:0.3px;left:2701.15px;transform:translateX(-50%);">19.94%</div>
<div class="t" style="top:597.31px;font-size:19px;color:rgba(190,150,185,0.9);letter-spacing:0.3px;left:2702.15px;transform:translateX(-50%);">0.01%</div>
<div class="t" style="top:615.70px;font-size:19px;color:rgba(200,150,185,0.9);letter-spacing:0.3px;left:2641.00px;">0.01</div>
<div class="t" style="top:615.70px;font-size:19px;color:rgba(245,170,90,0.95);letter-spacing:0.3px;left:2676.00px;">0.01</div>
<div class="t" style="top:615.70px;font-size:19px;color:rgba(215,100,110,0.9);letter-spacing:0.3px;left:2712.00px;">0.01%</div>
<div class="t" style="top:720.71px;font-size:32px;color:#333;letter-spacing:0.69px;left:1256.80px;-webkit-text-stroke:0.55px #333;">Top Utterances (Last 31 days)</div>
<div class="abs" style="left:1256.9px;top:779.7px;width:342.8px;height:242.0px;background:#2d5986"></div>
<div class="abs" style="left:1601.5px;top:779.7px;width:220.4px;height:242.0px;background:#45a2b9"></div>
<div class="abs" style="left:1823.8px;top:779.7px;width:321.6px;height:133.1px;background:#6db9c7"></div>
<div class="abs" style="left:1823.8px;top:914.8px;width:321.6px;height:106.9px;background:#8fcccf"></div>
<div class="abs" style="left:2147.2px;top:779.7px;width:269.7px;height:124.9px;background:#8fcccf"></div>
<div class="abs" style="left:2147.2px;top:906.6px;width:269.7px;height:115.1px;background:#9ad2d1"></div>
<div class="abs" style="left:2418.8px;top:779.7px;width:230.1px;height:120.0px;background:#a3d8d4"></div>
<div class="abs" style="left:2418.8px;top:901.2px;width:230.1px;height:120.5px;background:#a3d8d4"></div>
<div class="abs" style="left:2650.8px;top:779.7px;width:110.3px;height:242.0px;background:#a8dbd5"></div>
<div class="abs" style="left:2763.0px;top:779.7px;width:91.4px;height:242.0px;background:#bee6db"></div>
<div class="t" style="top:797.87px;font-size:20px;color:#fff;letter-spacing:0.176px;left:1269.30px;">business office</div>
<div class="t" style="top:797.87px;font-size:20px;color:#fff;letter-spacing:0.042px;left:1613.50px;">service</div>
<div class="t" style="top:797.87px;font-size:20px;color:#111;letter-spacing:-0.265px;left:1836.00px;">_ENV_ service</div>
<div class="t" style="top:933.07px;font-size:20px;color:#111;letter-spacing:-0.048px;left:1836.00px;">_ENV_ business office</div>
<div class="t" style="top:797.87px;font-size:20px;color:#111;letter-spacing:-0.273px;left:2159.00px;">sales</div>
<div class="t" style="top:925.07px;font-size:20px;color:#111;letter-spacing:0.165px;left:2159.00px;">chat</div>
<div class="t" style="top:797.87px;font-size:20px;color:#111;letter-spacing:0.33px;left:2431.00px;">service department</div>
<div class="t" style="top:920.07px;font-size:20px;color:#111;letter-spacing:0.143px;left:2431.00px;">customer service</div>
<div class="t" style="top:797.87px;font-size:20px;color:#111;letter-spacing:-0.868px;left:2663.00px;">_ENV_</div>
<div class="t" style="top:827.07px;font-size:20px;color:#111;letter-spacing:0.042px;left:2663.00px;">service</div>
<div class="t" style="top:856.07px;font-size:20px;color:#111;letter-spacing:-0.868px;left:2663.00px;">_ENV_</div>
<div class="t" style="top:797.87px;font-size:20px;color:#111;letter-spacing:-0.868px;left:2775.00px;">_ENV_</div>
<div class="t" style="top:827.07px;font-size:20px;color:#111;letter-spacing:0.042px;left:2775.00px;">service</div>
<div class="t" style="top:1058.91px;font-size:32px;color:#333;letter-spacing:0.911px;left:1256.80px;-webkit-text-stroke:0.55px #333;">Top 10 Utterance Daily Distribution (Last 31 days)</div>
<svg style="left:0;top:1100px" width="2872" height="218"><defs><clipPath id="bc"><rect x="1300" y="0" width="1500" height="157.5"/></clipPath></defs><g clip-path="url(#bc)" fill="#4e79a7" stroke="#d3d7dc" stroke-width="1.4"><rect x="1366.7" y="90.0" width="44.4" height="77.5"/><rect x="1411.1" y="88.4" width="44.4" height="79.1"/><rect x="1455.5" y="88.4" width="44.4" height="79.1"/><rect x="1499.9" y="92.0" width="44.4" height="75.5"/><rect x="1544.3" y="123.8" width="44.4" height="43.7"/><rect x="1588.7" y="143.2" width="44.4" height="24.3"/><rect x="1633.1" y="120.6" width="44.4" height="46.9"/><rect x="1677.5" y="86.8" width="44.4" height="80.7"/><rect x="1721.9" y="95.0" width="44.4" height="72.5"/><rect x="1766.3" y="90.0" width="44.4" height="77.5"/><rect x="1810.7" y="84.0" width="44.4" height="83.5"/><rect x="1855.1" y="119.3" width="44.4" height="48.2"/><rect x="1899.5" y="143.2" width="44.4" height="24.3"/><rect x="1943.9" y="74.0" width="44.4" height="93.5"/><rect x="1988.3" y="95.0" width="44.4" height="72.5"/><rect x="2032.7" y="90.0" width="44.4" height="77.5"/><rect x="2077.1" y="66.2" width="44.4" height="101.3"/><rect x="2121.5" y="63.0" width="44.4" height="104.5"/><rect x="2165.9" y="104.7" width="44.4" height="62.8"/><rect x="2210.3" y="136.8" width="44.4" height="30.7"/><rect x="2254.7" y="47.4" width="44.4" height="120.1"/><rect x="2299.1" y="66.2" width="44.4" height="101.3"/><rect x="2343.5" y="106.3" width="44.4" height="61.2"/><rect x="2387.9" y="69.3" width="44.4" height="98.2"/><rect x="2476.7" y="108.2" width="44.4" height="59.3"/><rect x="2521.1" y="136.8" width="44.4" height="30.7"/><rect x="2565.5" y="47.4" width="44.4" height="120.1"/><rect x="2609.9" y="59.8" width="44.4" height="107.7"/><rect x="2654.3" y="61.4" width="44.4" height="106.1"/><rect x="2698.7" y="64.6" width="44.4" height="102.9"/></g></svg>
<div class="t" style="top:1276.72px;font-size:19px;color:#757575;letter-spacing:-0.413px;left:1499.79px;transform:translateX(-50%);">3 Sep</div>
<div class="t" style="top:1276.72px;font-size:19px;color:#757575;letter-spacing:-0.413px;left:1721.09px;transform:translateX(-50%);">8 Sep</div>
<div class="t" style="top:1276.72px;font-size:19px;color:#757575;letter-spacing:-0.244px;left:1943.88px;transform:translateX(-50%);">13 Sep</div>
<div class="t" style="top:1276.72px;font-size:19px;color:#757575;letter-spacing:-0.244px;left:2166.48px;transform:translateX(-50%);">18 Sep</div>
<div class="t" style="top:1276.72px;font-size:19px;color:#757575;letter-spacing:-0.244px;left:2388.68px;transform:translateX(-50%);">23 Sep</div>
<div class="t" style="top:1276.72px;font-size:19px;color:#757575;letter-spacing:-0.244px;left:2610.18px;transform:translateX(-50%);">28 Sep</div>
<div class="t" style="top:1142.42px;font-size:19px;color:#8a8a8a;letter-spacing:0.3px;right:1585.70px;">10K</div>
<div class="t" style="top:1142.42px;font-size:19px;color:#8a8a8a;letter-spacing:0.3px;left:2825.50px;">10K</div>
<div class="t" style="top:1197.22px;font-size:19px;color:#8a8a8a;letter-spacing:0.3px;right:1585.70px;">5K</div>
<div class="t" style="top:1197.22px;font-size:19px;color:#8a8a8a;letter-spacing:0.3px;left:2825.50px;">5K</div>
<div class="t" style="top:1237.32px;font-size:19px;color:#8a8a8a;letter-spacing:0.3px;right:1585.70px;">0K</div>
<div class="t" style="top:1237.32px;font-size:19px;color:#8a8a8a;letter-spacing:0.3px;left:2825.50px;">0K</div>
<div class="t" style="left:1610.9px;top:1237px;font-size:19px;color:#6f87a6;letter-spacing:0.6px;transform-origin:0 0;transform:rotate(-90deg) translateY(-50%)">1,479</div>
<div class="t" style="left:2587.7px;top:1211px;font-size:19px;color:#a3bcd8;letter-spacing:0.6px;transform-origin:0 0;transform:rotate(-90deg) translateY(-50%)">10,405</div>
<div class="abs" style="left:0;top:1262px;width:2872px;height:56px;background:linear-gradient(180deg,rgba(0,0,0,0) 0%,rgba(0,0,0,0.02) 40%,rgba(0,0,0,0.10) 100%);-webkit-mask-image:linear-gradient(90deg,transparent 0,transparent 180px,#000 900px,#000 2380px,transparent 2700px);mask-image:linear-gradient(90deg,transparent 0,transparent 180px,#000 900px,#000 2380px,transparent 2700px)"></div>
<svg style="left:0;top:1298px" width="6" height="20"><path d="M0 0C0.3 8 1.5 15 4.2 20H0Z" fill="#1a1416"/></svg>
</body></html>
